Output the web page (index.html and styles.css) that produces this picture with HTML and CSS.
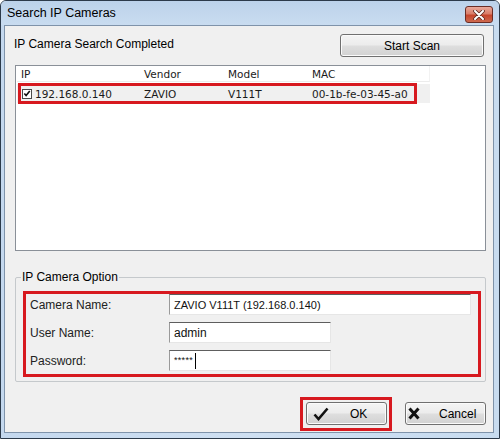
FILE: index.html
```html
<!DOCTYPE html>
<html>
<head>
<meta charset="utf-8">
<link rel="stylesheet" href="styles.css">
</head>
<body>
<div class="window">
  <div class="titlebar">
    <span class="title">Search IP Cameras</span>
    <div class="close">
      <svg width="12" height="10" viewBox="0 0 12 10">
        <path d="M2 1 L10 9 M10 1 L2 9" stroke="#5a2a22" stroke-width="3.6" stroke-linecap="round"/>
        <path d="M2 1 L10 9 M10 1 L2 9" stroke="#ffffff" stroke-width="2" stroke-linecap="round"/>
      </svg>
    </div>
  </div>
  <div class="client">
    <div class="toprow">
      <span class="status">IP Camera Search Completed</span>
      <button class="btn scan">Start Scan</button>
    </div>
    <div class="list">
      <div class="lhead">
        <div class="col c1">IP</div>
        <div class="col c2">Vendor</div>
        <div class="col c3">Model</div>
        <div class="col c4">MAC</div>
      </div>
      <div class="lrow">
        <div class="col c1"><span class="chk"><svg width="9" height="9" viewBox="0 0 9 9"><path d="M1.5 4.5 L3.5 6.8 L7.6 1.6" fill="none" stroke="#111" stroke-width="1.8"/></svg></span>192.168.0.140</div>
        <div class="col c2">ZAVIO</div>
        <div class="col c3">V111T</div>
        <div class="col c4">00-1b-fe-03-45-a0</div>
        <div class="rowmark"></div>
      </div>
    </div>
    <div class="group">
      <div class="legend">IP Camera Option</div>
      <div class="redbox">
        <div class="frow">
          <span class="flabel">Camera Name:</span>
          <div class="input wide">ZAVIO V111T (192.168.0.140)</div>
        </div>
        <div class="frow">
          <span class="flabel">User Name:</span>
          <div class="input">admin</div>
        </div>
        <div class="frow">
          <span class="flabel">Password:</span>
          <div class="input pw"><span class="stars">*****</span><span class="caret"></span></div>
        </div>
      </div>
    </div>
    <div class="actions">
      <div class="okframe">
        <button class="btn ok">
          <svg width="16" height="14" viewBox="0 0 16 14"><path d="M1.5 7.5 L5.5 12 L14.5 1.5" fill="none" stroke="#111" stroke-width="2.6"/></svg>
          <span>OK</span>
        </button>
      </div>
      <button class="btn cancel">
        <svg width="12" height="13" viewBox="0 0 12 13"><path d="M1.5 1.5 L10.5 11.5 M10.5 1.5 L1.5 11.5" stroke="#111" stroke-width="3"/></svg>
        <span>Cancel</span>
      </button>
    </div>
  </div>
</div>
</body>
</html>
```

FILE: styles.css
```css
* { box-sizing: border-box; }
html, body { margin: 0; padding: 0; background: #ffffff; }
body {
  font-family: "Liberation Sans", Arial, sans-serif;
  font-size: 12px;
  color: #000;
}
.window {
  width: 500px;
  height: 439px;
  border: 1px solid #2c3a4a;
  border-radius: 6px 6px 0 0;
  background: linear-gradient(to right, #c4d8ee 0%, #cfe0f2 50%, #c8dcf0 100%);
  display: flex;
  flex-direction: column;
  overflow: hidden;
}
.titlebar {
  height: 24px;
  display: flex;
  align-items: flex-start;
  justify-content: space-between;
  background: linear-gradient(#bcd2ea, #c9dcf0);
}
.title {
  margin: 5px 0 0 6px;
  font-size: 12.5px;
  line-height: 15px;
  color: #000;
}
.close {
  margin: 5px 6px 0 0;
  width: 28px;
  height: 17px;
  border: 1px solid #6a2c24;
  border-radius: 3px;
  background: linear-gradient(#e9a899 0%, #d97e6a 45%, #c6452c 55%, #cd6a4f 100%);
  display: flex;
  align-items: center;
  justify-content: center;
}
.client {
  margin: 0 5px 0 3px;
  height: 408px;
  border: 1px solid #7f93aa;
  background: #f0f0f0;
  display: flex;
  flex-direction: column;
}
.toprow {
  margin-top: 8px;
  height: 23px;
  display: flex;
  align-items: center;
  justify-content: space-between;
}
.status {
  margin-left: 9px;
  margin-top: -4px;
}
.btn {
  font-family: "Liberation Sans", Arial, sans-serif;
  font-size: 12px;
  color: #000;
  border: 1px solid #707070;
  border-radius: 3px;
  background: linear-gradient(#f4f4f4 0%, #ececec 48%, #dedede 52%, #d2d2d2 100%);
  box-shadow: inset 0 0 0 1px #fbfbfb;
  padding: 0;
  height: 23px;
  display: flex;
  align-items: center;
  justify-content: center;
}
.scan {
  width: 144px;
  margin-right: 9px;
}
.list {
  margin: 8px 7px 0 10px;
  height: 186px;
  border: 1px solid #8a9098;
  background: #ffffff;
  padding-left: 1px;
  font-family: "DejaVu Sans", Verdana, sans-serif;
  font-size: 10.5px;
  color: #1a1a1a;
}
.lhead {
  height: 16px;
  display: flex;
  align-items: center;
}
.lhead .col {
  height: 16px;
  line-height: 16px;
  border-bottom: 1px solid #ececec;
}
.lhead .c4 { border-right: 1px solid #f2f2f2; }
.col {
  padding-left: 4px;
  white-space: nowrap;
}
.c1 { width: 123px; }
.c2 { width: 84px; }
.c3 { width: 84px; }
.c4 { width: 122px; }
.lrow {
  position: relative;
  margin-top: 2px;
  height: 19px;
  display: flex;
  align-items: center;
  width: 413px;
  background: #f0f0f0;
}
.lrow .c1 {
  display: flex;
  align-items: center;
  padding-left: 5px;
}
.chk {
  width: 10px;
  height: 10px;
  border: 1px solid #4a4a4a;
  background: #fff;
  margin-right: 3px;
  display: flex;
  align-items: center;
  justify-content: center;
}
.rowmark {
  position: absolute;
  left: 1px;
  top: -1px;
  width: 399px;
  height: 21px;
  border: 3px solid #d7191f;
}
.group {
  margin: 26px 7px 0 10px;
  height: 105px;
  border: 1px solid #c5c9cc;
  border-radius: 2px;
}
.legend {
  margin: -8px 0 0 5px;
  height: 15px;
  line-height: 15px;
  padding: 0 1px;
  background: #f0f0f0;
  width: fit-content;
}
.redbox {
  margin: 6px 4px 0 7px;
  height: 86px;
  border: 3px solid #d7191f;
  padding: 0 0 0 4px;
  display: flex;
  flex-direction: column;
  gap: 7px;
}
.frow {
  height: 21px;
  display: flex;
  align-items: center;
}
.flabel {
  width: 139px;
  color: #222;
}
.input {
  width: 162px;
  height: 21px;
  background: #ffffff;
  border-top: 1px solid #5e5e5e;
  border-left: 1px solid #9a9a9a;
  border-right: 1px solid #e6e6e6;
  border-bottom: 1px solid #e6e6e6;
  padding-left: 4px;
  display: flex;
  align-items: center;
  color: #111;
}
.input.wide {
  width: 302px;
  font-size: 11px;
}
.stars {
  font-size: 9px;
  margin-top: -2px;
  letter-spacing: 0.3px;
}
.caret {
  width: 1px;
  height: 16px;
  background: #000;
  margin-left: 2px;
}
.actions {
  margin: 15px 7px 0 0;
  height: 34px;
  display: flex;
  justify-content: flex-end;
  align-items: flex-start;
  gap: 13px;
}
.okframe {
  width: 92px;
  height: 34px;
  border: 3px solid #d7191f;
  padding: 2px 2px 3px 3px;
}
.ok, .cancel {
  width: 81px;
  height: 23px;
  justify-content: flex-start;
}
.ok svg { margin-left: 6px; }
.ok span { margin-left: 21px; }
.cancel { margin-top: 5px; }
.cancel svg { margin-left: 2px; }
.cancel span { margin-left: 19px; }
```
